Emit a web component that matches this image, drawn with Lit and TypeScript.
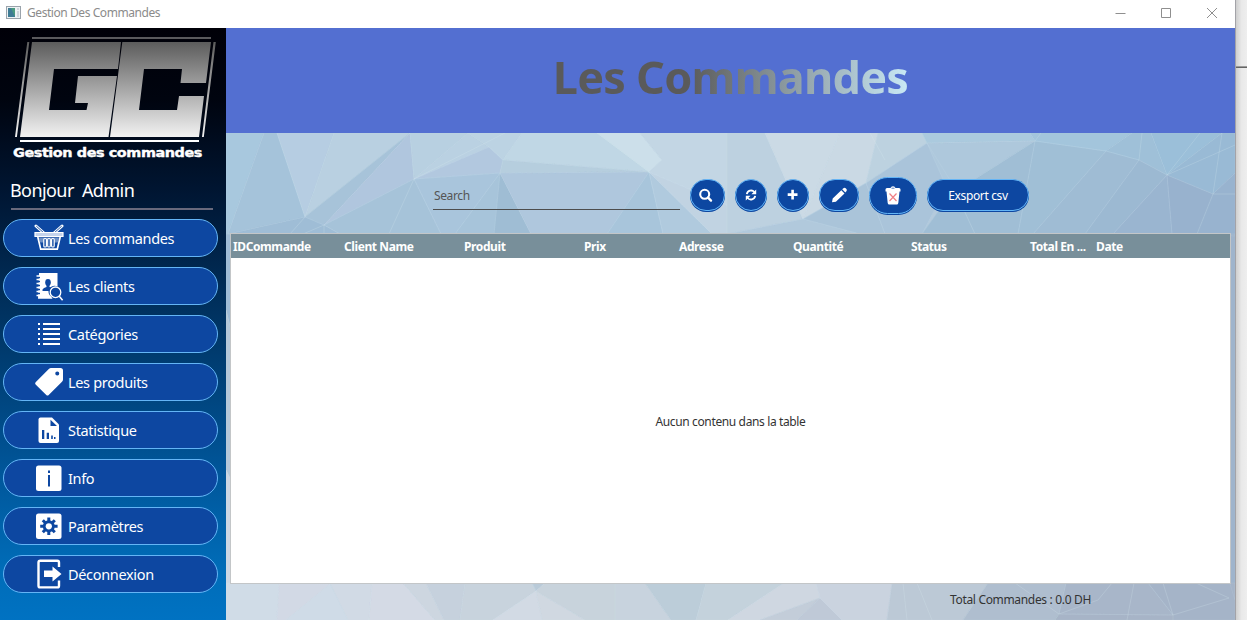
import { LitElement, html, css, svg } from "lit";
import { customElement } from "lit/decorators.js";

/* Facets of the low-poly wallpaper: points + fill */
const FACETS: [string, string][] = [
  ["226,133 264,133 228,234 226,234", "#a8c8de"],
  ["264,133 277,133 305,217 228,234", "#a5c3da"],
  ["277,133 334,133 305,217", "#b6cde2"],
  ["334,133 410,133 305,217", "#b9d0e1"],
  ["410,133 305,217 324,225", "#a7c3d9"],
  ["410,133 414,179 324,225", "#b0c6de"],
  ["228,234 305,217 324,225 340,234", "#9fbdd6"],
  ["324,225 414,179 441,234 340,234", "#a6c3d9"],
  ["410,133 468,133 414,179", "#b8d0e1"],
  ["468,133 489,147 414,179", "#bad1e2"],
  ["489,147 503,160 500,173 414,179", "#b2c8df"],
  ["414,179 500,173 455,234 441,234", "#a9c5dc"],
  ["468,133 522,133 503,160 489,147", "#bcd3e3"],
  ["522,133 597,133 649,172 503,160", "#c0d7e5"],
  ["503,160 649,172 500,173", "#b6cede"],
  ["500,173 455,234 494,234", "#a7c4da"],
  ["500,173 494,234 531,234", "#9fbdd4"],
  ["500,173 649,172 607,234 531,234", "#afc7dd"],
  ["649,172 607,234 663,234", "#a8c5db"],
  ["649,172 663,234 712,234", "#b0cade"],
  ["597,133 640,133 662,160 649,172", "#ccdfea"],
  ["640,133 727,133 727,205 649,172 662,160", "#c3d6e4"],
  ["649,172 727,205 727,234 712,234", "#c1d3e2"],
  ["727,133 765,133 803,219 727,234", "#bdd1e0"],
  ["765,133 840,133 803,219", "#cbdae5"],
  ["840,133 878,133 866,183 803,219", "#cad9e4"],
  ["727,234 803,219 860,234", "#b1c9dc"],
  ["803,219 866,183 885,234 860,234", "#aac4d9"],
  ["878,133 922,133 927,143 866,183", "#bdd2e0"],
  ["866,183 927,143 950,180 922,234 885,234", "#aac4da"],
  ["922,133 1030,133 1035,141 927,143", "#abcade"],
  ["927,143 1035,141 950,195", "#aec8dc"],
  ["950,195 1035,141 1018,234 922,234", "#a0bed5"],
  ["1035,141 1106,151 1033,234 1018,234", "#a0bfd6"],
  ["1030,133 1132,133 1106,151 1035,141", "#a3c5dc"],
  ["1106,151 1139,160 1085,234 1033,234", "#9fbcd4"],
  ["1132,133 1151,133 1167,175 1139,160 1106,151", "#9fc0d8"],
  ["1139,160 1167,175 1113,234 1085,234", "#9cb9d2"],
  ["1167,175 1172,234 1113,234", "#9ab5d0"],
  ["1151,133 1222,133 1167,175", "#9bbfd9"],
  ["1222,133 1235,133 1235,173 1213,194 1167,175", "#99bad5"],
  ["1167,175 1213,194 1197,234 1172,234", "#98b2ce"],
  ["1213,194 1235,173 1235,236 1197,234", "#98b3cf"],
  ["226,234 231,234 231,330 226,310", "#9fbcd6"],
  ["226,310 231,330 231,480 226,470", "#b4c8da"],
  ["226,470 231,480 231,584 226,584", "#ccd7e4"],
  ["1230,234 1235,234 1235,600 1230,584", "#9fb4cc"],
  ["226,583 279,583 277,620 226,620", "#d0dce7"],
  ["279,583 330,584 286,620 277,620", "#d2d9e5"],
  ["330,584 348,620 286,620", "#cfdbe7"],
  ["330,583 372,583 369,620 348,620", "#d1dae5"],
  ["372,583 403,583 435,620 369,620", "#d4dae5"],
  ["403,583 426,583 444,620 435,620", "#cdd6e0"],
  ["426,583 465,583 460,620 444,620", "#c6d1dd"],
  ["465,583 532,583 536,591 493,620 460,620", "#c8d3dd"],
  ["532,583 545,583 536,591", "#b9cad8"],
  ["536,591 542,620 493,620", "#d2dae4"],
  ["536,591 585,620 542,620", "#d0d8e1"],
  ["545,583 615,583 615,620 585,620 536,591", "#c8d3dc"],
  ["615,583 645,583 671,620 615,620", "#c8d3de"],
  ["645,583 706,583 696,620 671,620", "#bccdd9"],
  ["706,583 784,583 728,620 696,620", "#c4d2dc"],
  ["784,583 816,583 820,598 760,620 728,620", "#cfd7e1"],
  ["820,598 797,620 760,620", "#c3cdd9"],
  ["820,598 842,620 797,620", "#bfc9d7"],
  ["816,583 892,583 887,620 842,620 820,598", "#cad3df"],
  ["892,583 988,583 963,620 887,620", "#bcc9d6"],
  ["988,583 1066,583 1059,614 1055,620 963,620", "#afbecf"],
  ["1066,583 1148,583 1173,615 1059,614", "#a8b6c9"],
  ["1148,583 1235,583 1235,620 1173,620 1173,615", "#a5b4c8"],
  ["1059,614 1173,615 1173,620 1055,620", "#a7b4c7"],
];

/* Faint highlights that run between the vertices */
const RIDGES =
  "M324 225V234M305 217L290 234M324 225L303 234M414 179L389 234M414 179L505 133M1035 141L1041 133" +
  "M1167 175L1200 133M1167 175L1235 145M1213 194H1235M1213 194L1222 133M1139 160L1142 133M950 180L975 234M885 160L870 133" +
  "M903 583L907 620M917 583L932 620M1015 583L1059 614M1059 614L1098 600L1112 583M1173 615L1163 583M1173 615L1229 598L1196 583M1134 583L1127 620";

const ICONS = {
  basket: svg`<g fill="none" stroke="#fff"><path d="M2 3l9 8M28 3l-9 8" stroke-width="3" stroke-linecap="round"/><path d="M2.300 3.200l9 8M27.700 3.200l-9 8" stroke="#0d47a1" stroke-width=".9"/><path d="M5 14.500h20l-1.200 5H6.200z" fill="#fff" fill-opacity=".4" stroke="none"/><path d="M3.800 14l2.900 12.200h16.600L26.200 14" stroke-width="1.700"/><path d="M1 9.500h28v4H1z" fill="#c4d3ec" stroke-width="1.200"/><g fill="#0d47a1" stroke-width="1.200"><rect x="9.800" y="15.500" width="2.600" height="8.500" rx="1"/><rect x="13.700" y="15.500" width="2.600" height="8.500" rx="1"/><rect x="17.600" y="15.500" width="2.600" height="8.500" rx="1"/></g></g>`,
  clients: svg`<path fill="#fff" d="M5 2h18.500v13.500a6 6 0 0 0-6 10.500l1 1.700H4z"/><path d="M2 6.500h4M2 10.500h4M2 14.500h4M2 18.500h4M2 22.500h4" stroke="#0d47a1" stroke-width="1.300"/><path d="M2.500 5h3M2.500 8.500h3M2.500 12.500h3M2.500 16.500h3M2.500 20.500h3M2.500 24.500h3" stroke="#fff" stroke-width="1.500"/><ellipse cx="14" cy="11.500" rx="2.800" ry="3.400" fill="#0d47a1"/><path fill="#0d47a1" d="M8.500 20v-1.500q1-2 4-2.500v-3h3v3l3 1-2 3z"/><circle cx="21.500" cy="21.300" r="5.300" fill="#0d47a1" stroke="#fff" stroke-width="1.300"/><path d="M25.300 25.300l3.300 4" stroke="#fff" stroke-width="1.500"/>`,
  list: svg`<path fill="#fff" d="M4 4h2v2H4zM4 9h2v2H4zM4 14h2v2H4zM4 19h2v2H4zM4 24h2v2H4zM9 4h17v2H9zM9 9h17v2H9zM9 14h17v2H9zM9 19h17v2H9zM9 24h17v2H9z"/>`,
  tag: svg`<path fill="#fff" fill-rule="evenodd" d="M17 1h9.500q2.500 0 2.500 2.500v9q0 1.200-1 2.200L14.700 28q-1.200 1-2.400 0L1.600 17.500q-1-1 0-2.200L14.800 2Q15.800 1 17 1zM23.200 4.500a2 2 0 1 0 .1 4a2 2 0 1 0-.1-4z"/>`,
  stats: svg`<path fill="#fff" d="M6.500 2.500h11.500l7 7v16.500q0 2-2 2H6.500q-2 0-2-2V4.500q0-2 2-2z"/><path fill="#0d47a1" d="M16.500 4.800l6.500 6.200h-6.500zM8 15h2.300V24H8zM12.700 17.800h2.300V24h-2.300zM17.200 20.500h1.600V24h-1.600zM20 22h1.500v2H20z"/>`,
  info: svg`<rect x="2" y="2.500" width="25.500" height="25.500" rx="2.500" fill="#fff"/><path fill="#0d47a1" d="M14 7.500h2v2.500h-2zM14 12h2v11.500h-2z"/>`,
  gear: svg`<rect x="2" y="2.500" width="25.500" height="25.500" rx="2.500" fill="#fff"/><g stroke="#0d47a1" stroke-width="3"><path d="M14.800 6.500v17.500M6.200 15.300h17.400M8.800 9.300l12 12M20.800 9.300l-12 12"/></g><circle cx="14.800" cy="15.300" r="6" fill="#0d47a1"/><circle cx="14.800" cy="15.300" r="3.100" fill="#fff"/>`,
  exit: svg`<path d="M25 8V3.500q0-1.700-1.700-1.700H6.200q-1.700 0-1.700 1.700v23.200q0 1.700 1.700 1.700h17.100q1.700 0 1.700-1.700V21.500" fill="none" stroke="#fff" stroke-width="2.400"/><path fill="#fff" d="M10 11.500h8.500V7.500l9 7.500-9 7.500v-4.500H10z"/>`,
  search: svg`<circle cx="11.700" cy="14.300" r="4.500" fill="none" stroke="#fff" stroke-width="2.100"/><path d="M15.100 17.600l2.900 3" stroke="#fff" stroke-width="2.400" stroke-linecap="round"/>`,
  refresh: svg`<g fill="none" stroke="#fff" stroke-width="1.800"><path d="M10.800 14.200a4.400 4.400 0 0 1 7.600-2.200M19.200 15.800a4.400 4.400 0 0 1-7.600 2.200"/></g><path fill="#fff" d="M20.200 9.500v4.800h-4.800zM9.800 20.500v-4.800h4.800z"/>`,
  plus: svg`<path d="M14.600 9.700v9.800M9.700 14.600h9.800" stroke="#fff" stroke-width="2.600"/>`,
  pencil: svg`<path fill="#fff" d="M8 22.300l.7-3.800 8.600-8.200 3.200 3.200-8.600 8.200zM18.200 9.300l1.200-1.100q1.200-1 2.300.1l.7.800q1 1.100 0 2.200l-1.100 1.100z"/>`,
  trash: svg`<path fill="#fff" d="M7.500 8.500q0-1.500 1.500-1.500h3.500q.5-1.700 2.500-1.700T17.500 7H21q1.500 0 1.500 1.500v2h-1L20.300 22q-.2 1.500-1.500 1.500h-7.600q-1.300 0-1.500-1.500L8.500 10.500h-1z"/><path d="M11.500 12.500l7 7.500M18.500 12.500l-7 7.500" stroke="#ef7f86" stroke-width="1.200"/><path d="M13.500 7.200h3" stroke="#0d47a1" stroke-width=".7"/>`,
};

const NAV: [keyof typeof ICONS, string][] = [
  ["basket", "Les commandes"],
  ["clients", "Les clients"],
  ["list", "Catégories"],
  ["tag", "Les produits"],
  ["stats", "Statistique"],
  ["info", "Info"],
  ["gear", "Paramètres"],
  ["exit", "Déconnexion"],
];

const COLUMNS = ["IDCommande", "Client Name", "Produit", "Prix", "Adresse", "Quantité", "Status", "Total En ...", "Date"];

const icon = (name: keyof typeof ICONS) =>
  html`<svg class="icon" width="30" height="30" viewBox="0 0 30 30">${ICONS[name]}</svg>`;

@customElement("gc-logo")
export class GcLogo extends LitElement {
  static styles = css`
    :host { display: block; height: 142px; }
    svg { display: block; }
    .caption { font: 700 12.5px "DejaVu Sans", sans-serif; fill: #fff; stroke: #fff; stroke-width: 0.4; }
  `;
  render() {
    return html`<svg width="226" height="142" viewBox="0 28 226 142">
      <defs>
        <linearGradient id="metal" gradientUnits="userSpaceOnUse" x1="0" y1="42" x2="0" y2="137">
          <stop offset="0" stop-color="#5c5c5c" /><stop offset="1" stop-color="#f2f2f2" />
        </linearGradient>
      </defs>
      <g fill="url(#metal)">
        <path d="M32 42H121L118 69H54L49 110H86.500L88 103H75L78 76H117L108.500 137H20z" />
        <path d="M122.300 42H211L206 83H180.500L182 69H144L139 110H177L179 96H204L199 137H110z" />
        <path d="M27.300 42h2L16.900 137h-1.900zM213.500 42h2.300L203.800 137h-1.800z" />
      </g>
      <path d="M32 37H211V39H32z" fill="#5a5a5d" />
      <path d="M20 140H199V142H20z" fill="#fff" />
      <text class="caption" x="13" y="157" textLength="189" lengthAdjust="spacingAndGlyphs">Gestion des commandes</text>
    </svg>`;
  }
}

@customElement("app-root")
export class AppRoot extends LitElement {
  static styles = css`
    :host {
      display: grid;
      grid-template-columns: 1235px 12px;
      width: 1247px;
      height: 620px;
      overflow: hidden;
      font-family: "Noto Sans", "Open Sans", sans-serif;
      font-size: 12px;
      letter-spacing: -0.37px;
      line-height: 16px;
    }
    * { box-sizing: border-box; }
    .window { display: grid; grid-template-rows: 28px 592px; min-width: 0; }
    .titlebar { display: flex; align-items: center; background: #fff; color: #8b8b8b; padding: 0 17px 3px 6px; }
    .titlebar .name { flex: 1; margin-left: 6px; letter-spacing: -0.43px; }
    .titlebar .controls { display: flex; gap: 34px; }
    svg { display: block; flex: none; }
    .body { display: grid; grid-template-columns: 226px 1009px; }
    .side {
      background: linear-gradient(#000008 0%, #00040f 12%, #001633 28%, #003260 48%, #00569a 75%, #006db9 92%, #0072c2 100%);
    }
    .hello { font-size: 18px; letter-spacing: -0.58px; line-height: 24px; color: #fff; padding: 8px 0 0 10px; white-space: pre; height: 38px; }
    .rule { height: 2px; margin: 0 13px 9px 11px; background: #69697c; }
    .nav { display: grid; gap: 10px; padding: 0 8px 0 3px; }
    .nav-item {
      display: flex; align-items: center; gap: 4px;
      height: 38px; padding-left: 30px;
      border: 1px solid #64b5f6; border-radius: 19px;
      background: #0d47a1; color: #fff;
      font: 14.5px "Noto Sans", sans-serif;
      letter-spacing: -0.33px;
    }
    .main { display: grid; grid-template-rows: 105px 487px; }
    .banner { background: #536fd1; display: flex; justify-content: center; align-items: center; padding-bottom: 8px; }
    .banner h1 {
      margin: 0; font-size: 45px; letter-spacing: -0.75px; line-height: 60px; font-weight: 700;
      background: linear-gradient(90deg, #5a5a5a 0%, #5a5a5a 38%, #c8e8f5 100%);
      background-clip: text; -webkit-background-clip: text; color: transparent;
    }
    .stage { display: grid; grid-template: 487px / 1009px; }
    .stage > * { grid-area: 1 / 1; }
    .content { position: relative; display: flex; flex-direction: column; }
    .tools { height: 100px; padding: 44px 0 0 207px; display: flex; align-items: flex-start; }
    .search { width: 247px; height: 33px; border-bottom: 1px solid #4d4d4d; color: #555; padding: 11px 0 0 1px; margin-right: 10px; }
    .btn {
      display: flex; align-items: center; justify-content: center;
      height: 32px; margin-top: 2px;
      border: 1px solid #64b5f6; border-radius: 20px;
      background: #0d47a1; color: #fff;
      box-shadow: 0 1px 0 #0d47a1;
    }
    .w-search { width: 35px; margin-right: 10px; }
    .w-refresh { width: 32px; margin-right: 10px; }
    .w-plus { width: 32px; margin-right: 10px; }
    .w-pencil { width: 40px; margin-right: 10px; }
    .w-trash { width: 48px; height: 37px; margin-top: 0; margin-right: 10px; }
    .w-csv { width: 102px; padding-top: 2px; }
    .table {
      width: 1001px; height: 351px; margin-left: 4px;
      border: 1px solid #c3c6c8; background: #fff;
      display: grid; grid-template-rows: 24px 1fr;
    }
    .head {
      display: grid;
      grid-template-columns: 111px 120px 120px 95px 114px 118px 119px 66px 1fr;
      align-items: center; padding: 2px 0 0 2px;
      background: #788f9a; color: #fff; font-weight: 700; letter-spacing: -0.4px; white-space: nowrap;
    }
    .empty { display: grid; place-items: center; padding-top: 2px; color: #333; }
    .total { color: #333; padding: 8px 0 0 724px; letter-spacing: -0.33px; }
    .desk { background: linear-gradient(90deg, #cfcfcf, #e9e9e9 50%, #eee); border-left: 1px solid #a3a3a8; padding-top: 66px; }
    .desk-line { height: 2px; background: linear-gradient(#999 50%, #646464 50%); }
  `;

  render() {
    return html`
      <div class="window">
        <div class="titlebar">
          <svg width="15" height="13" viewBox="0 0 15 13">
            <rect x=".5" y=".5" width="14" height="12" fill="#eef2f4" stroke="#9aa3ab" />
            <rect x="2" y="2" width="7" height="9" fill="#4a9a80" /><path d="M2 2h3l4 9H2z" fill="#3b6f9e" opacity=".7" />
            <path d="M11 2h2v2h-2zM11 5h2v6h-2z" fill="#cfd6dc" />
          </svg>
          <span class="name">Gestion Des Commandes</span>
          <div class="controls">
            <svg width="12" height="12" viewBox="0 0 12 12" stroke="#8f8f8f"><path d="M1.500 6.500h10" /></svg>
            <svg width="12" height="12" viewBox="0 0 12 12" stroke="#8f8f8f" fill="none"><path d="M1.500 1.500h9v9h-9z" /></svg>
            <svg width="12" height="12" viewBox="0 0 12 12" stroke="#8f8f8f"><path d="M1 1l10 10M11 1L1 11" /></svg>
          </div>
        </div>
        <div class="body">
          <div class="side">
            <gc-logo></gc-logo>
            <div class="hello">Bonjour  Admin</div>
            <div class="rule"></div>
            <div class="nav">
              ${NAV.map(([name, label]) => html`<div class="nav-item">${icon(name)}<span>${label}</span></div>`)}
            </div>
          </div>
          <div class="main">
            <div class="banner"><h1>Les Commandes</h1></div>
            <div class="stage">
              <svg width="1009" height="487" viewBox="226 133 1009 487">
                <rect x="226" y="133" width="1009" height="487" fill="#b4cadc" />
                ${FACETS.map(([points, fill]) => svg`<polygon points=${points} fill=${fill} stroke=${fill} stroke-width=".5"/>`)}
                ${FACETS.map(([points]) => svg`<polygon points=${points} fill="none" stroke="#dcebf3" stroke-opacity=".13" stroke-width=".8"/>`)}
                <path d=${RIDGES} fill="none" stroke="#dcebf3" stroke-opacity=".28" stroke-width=".8" />
              </svg>
              <div class="content">
                <div class="tools">
                  <div class="search">Search</div>
                  <div class="btn w-search">${icon("search")}</div>
                  <div class="btn w-refresh">${icon("refresh")}</div>
                  <div class="btn w-plus">${icon("plus")}</div>
                  <div class="btn w-pencil">${icon("pencil")}</div>
                  <div class="btn w-trash">${icon("trash")}</div>
                  <div class="btn w-csv">Exsport csv</div>
                </div>
                <div class="table">
                  <div class="head">${COLUMNS.map((c) => html`<span>${c}</span>`)}</div>
                  <div class="empty">Aucun contenu dans la table</div>
                </div>
                <div class="total">Total Commandes : 0.0 DH</div>
              </div>
            </div>
          </div>
        </div>
      </div>
      <div class="desk"><div class="desk-line"></div></div>
    `;
  }
}
